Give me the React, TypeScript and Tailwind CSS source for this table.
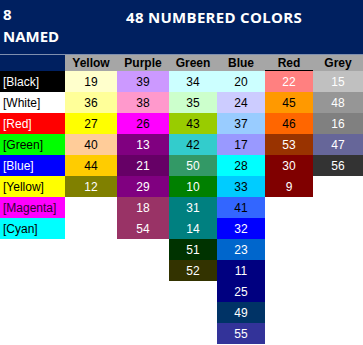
import React from "react";

type Cell = { n: number; bg: string; dark: boolean };

const named = [
  { label: "[Black]", bg: "bg-[#000000]", text: "text-white" },
  { label: "[White]", bg: "bg-[#ffffff]", text: "text-black" },
  { label: "[Red]", bg: "bg-[#ff0000]", text: "text-white" },
  { label: "[Green]", bg: "bg-[#00ff00]", text: "text-black" },
  { label: "[Blue]", bg: "bg-[#0000ff]", text: "text-white" },
  { label: "[Yellow]", bg: "bg-[#ffff00]", text: "text-black" },
  { label: "[Magenta]", bg: "bg-[#ff00ff]", text: "text-[#330033]" },
  { label: "[Cyan]", bg: "bg-[#00ffff]", text: "text-black" },
];

// excel colour index palette, grouped by hue
const groups: { name: string; width: string; cells: Cell[] }[] = [
  {
    name: "Yellow",
    width: "w-[52px]",
    cells: [
      { n: 19, bg: "bg-[#ffffcc]", dark: false },
      { n: 36, bg: "bg-[#ffff99]", dark: false },
      { n: 27, bg: "bg-[#ffff00]", dark: false },
      { n: 40, bg: "bg-[#ffcc99]", dark: false },
      { n: 44, bg: "bg-[#ffcc00]", dark: false },
      { n: 12, bg: "bg-[#808000]", dark: true },
    ],
  },
  {
    name: "Purple",
    width: "w-[52px]",
    cells: [
      { n: 39, bg: "bg-[#cc99ff]", dark: false },
      { n: 38, bg: "bg-[#ff99cc]", dark: false },
      { n: 26, bg: "bg-[#ff00ff]", dark: false },
      { n: 13, bg: "bg-[#800080]", dark: true },
      { n: 21, bg: "bg-[#660066]", dark: true },
      { n: 29, bg: "bg-[#800080]", dark: true },
      { n: 18, bg: "bg-[#993366]", dark: true },
      { n: 54, bg: "bg-[#993366]", dark: true },
    ],
  },
  {
    name: "Green",
    width: "w-[48px]",
    cells: [
      { n: 34, bg: "bg-[#ccffff]", dark: false },
      { n: 35, bg: "bg-[#ccffcc]", dark: false },
      { n: 43, bg: "bg-[#99cc00]", dark: false },
      { n: 42, bg: "bg-[#33cccc]", dark: false },
      { n: 50, bg: "bg-[#339966]", dark: true },
      { n: 10, bg: "bg-[#008000]", dark: true },
      { n: 31, bg: "bg-[#008080]", dark: true },
      { n: 14, bg: "bg-[#008080]", dark: true },
      { n: 51, bg: "bg-[#003300]", dark: true },
      { n: 52, bg: "bg-[#333300]", dark: true },
    ],
  },
  {
    name: "Blue",
    width: "w-[48px]",
    cells: [
      { n: 20, bg: "bg-[#ccffff]", dark: false },
      { n: 24, bg: "bg-[#ccccff]", dark: false },
      { n: 37, bg: "bg-[#99ccff]", dark: false },
      { n: 17, bg: "bg-[#9999ff]", dark: false },
      { n: 28, bg: "bg-[#00ffff]", dark: false },
      { n: 33, bg: "bg-[#00ccff]", dark: false },
      { n: 41, bg: "bg-[#3366ff]", dark: false },
      { n: 32, bg: "bg-[#0000ff]", dark: true },
      { n: 23, bg: "bg-[#0066cc]", dark: true },
      { n: 11, bg: "bg-[#000080]", dark: true },
      { n: 25, bg: "bg-[#000080]", dark: true },
      { n: 49, bg: "bg-[#003366]", dark: true },
      { n: 55, bg: "bg-[#333399]", dark: true },
    ],
  },
  {
    name: "Red",
    width: "w-[48px]",
    cells: [
      { n: 22, bg: "bg-[#ff8080]", dark: true },
      { n: 45, bg: "bg-[#ff9900]", dark: false },
      { n: 46, bg: "bg-[#ff6600]", dark: false },
      { n: 53, bg: "bg-[#993300]", dark: true },
      { n: 30, bg: "bg-[#800000]", dark: true },
      { n: 9, bg: "bg-[#800000]", dark: true },
    ],
  },
  {
    name: "Grey",
    width: "w-[50px]",
    cells: [
      { n: 15, bg: "bg-[#c0c0c0]", dark: true },
      { n: 48, bg: "bg-[#969696]", dark: true },
      { n: 16, bg: "bg-[#808080]", dark: true },
      { n: 47, bg: "bg-[#666699]", dark: true },
      { n: 56, bg: "bg-[#333333]", dark: true },
    ],
  },
];

const cellFont = "font-['Liberation_Sans',Arial,sans-serif] text-[12px]";

export default function App() {
  return (
    <div className="w-[363px] h-[345px] bg-white overflow-hidden">
      {/* title band */}
      <div className="flex h-[54px] bg-[#002060] text-white font-['Open_Sans',sans-serif] font-bold text-[15px]">
        <div className="w-[65px] pl-[3px] pt-[3px] leading-[22px]">
          <div>8</div>
          <div>NAMED</div>
        </div>
        <div className="flex-1 text-center pt-[6px] leading-[22px] tracking-[0.3px]">
          48 NUMBERED COLORS
        </div>
      </div>
      <div className="h-px bg-[#7f8fae]" />

      <div className="flex items-start">
        <div className="w-[65px] flex flex-col">
          <div className="h-[16px] bg-[#002060]" />
          {named.map((r) => (
            <div
              key={r.label}
              className={`h-[21px] flex items-center pl-[3px] ${r.bg} ${r.text} ${cellFont}`}
            >
              {r.label}
            </div>
          ))}
        </div>

        {groups.map((g) => (
          <div key={g.name} className={`${g.width} flex flex-col`}>
            <div
              className={`h-[16px] bg-[#a6a6a6] flex items-center justify-center text-black font-bold ${cellFont} ${
                g.name === "Red" ? "border-b border-black" : ""
              }`}
            >
              {g.name}
            </div>
            {g.cells.map((c) => (
              <div
                key={c.n}
                className={`h-[21px] flex items-center justify-center ${c.bg} ${
                  c.dark ? "text-white" : "text-black"
                } ${cellFont}`}
              >
                {c.n}
              </div>
            ))}
          </div>
        ))}
      </div>
    </div>
  );
}
